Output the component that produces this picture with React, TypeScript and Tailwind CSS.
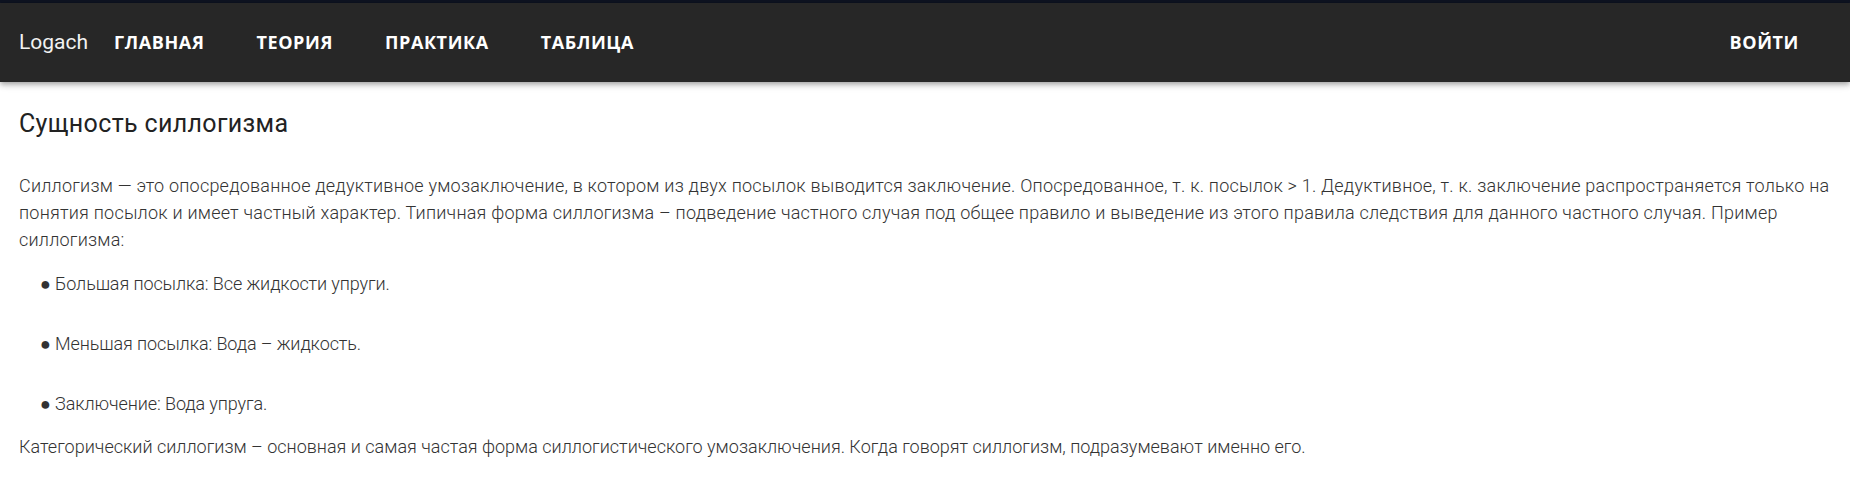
import React from "react";

const nav = ["ГЛАВНАЯ", "ТЕОРИЯ", "ПРАКТИКА", "ТАБЛИЦА"];

export default function App() {
  return (
    <div className="min-h-screen bg-white" style={{ fontFamily: "Roboto, 'Noto Sans', sans-serif" }}>
      <div className="h-[3px] bg-[#0e1321]" />
      <header className="relative z-10 flex h-[79px] items-center bg-[#272727] pl-[19px] pr-[51px] text-white shadow-[0_2px_4px_-1px_rgba(0,0,0,0.2),0_4px_5px_0_rgba(0,0,0,0.14),0_1px_10px_0_rgba(0,0,0,0.12)]">
        <div className="text-[21px] font-normal text-[#f2f2f2]">Logach</div>
        <nav className="ml-[26px] flex items-center gap-[52px] font-['Open_Sans',sans-serif] text-[18px] font-bold tracking-[0.6px]">
          {nav.map((n) => (
            <span key={n}>{n}</span>
          ))}
        </nav>
        <div className="ml-auto font-['Open_Sans',sans-serif] text-[18px] font-bold tracking-[0.6px]">ВОЙТИ</div>
      </header>
      <main className="px-[19px] pt-[26px] text-[#222]">
        <h1 className="text-[25px] font-normal leading-[32px] tracking-[0.35px] text-[#222]">Сущность силлогизма</h1>
        <p className="mt-[32px] text-[18px] font-light leading-[27px] tracking-[0.22px] text-[#333]">
          Силлогизм — это опосредованное дедуктивное умозаключение, в котором из двух посылок выводится заключение. Опосредованное, т. к. посылок &gt; 1. Дедуктивное, т. к. заключение распространяется только на понятия посылок и имеет частный характер. Типичная форма силлогизма – подведение частного случая под общее правило и выведение из этого правила следствия для данного частного случая. Пример силлогизма:
        </p>
        <ul className="mt-[17px] flex flex-col gap-[33px] pl-[21px] text-[18px] font-light leading-[27px] tracking-[-0.1px] text-[#333]">
          <li>● Большая посылка: Все жидкости упруги.</li>
          <li>● Меньшая посылка: Вода – жидкость.</li>
          <li>● Заключение: Вода упруга.</li>
        </ul>
        <p className="mt-[16px] text-[18px] font-light leading-[27px] text-[#333]">
          Категорический силлогизм – основная и самая частая форма силлогистического умозаключения. Когда говорят силлогизм, подразумевают именно его.
        </p>
      </main>
    </div>
  );
}
